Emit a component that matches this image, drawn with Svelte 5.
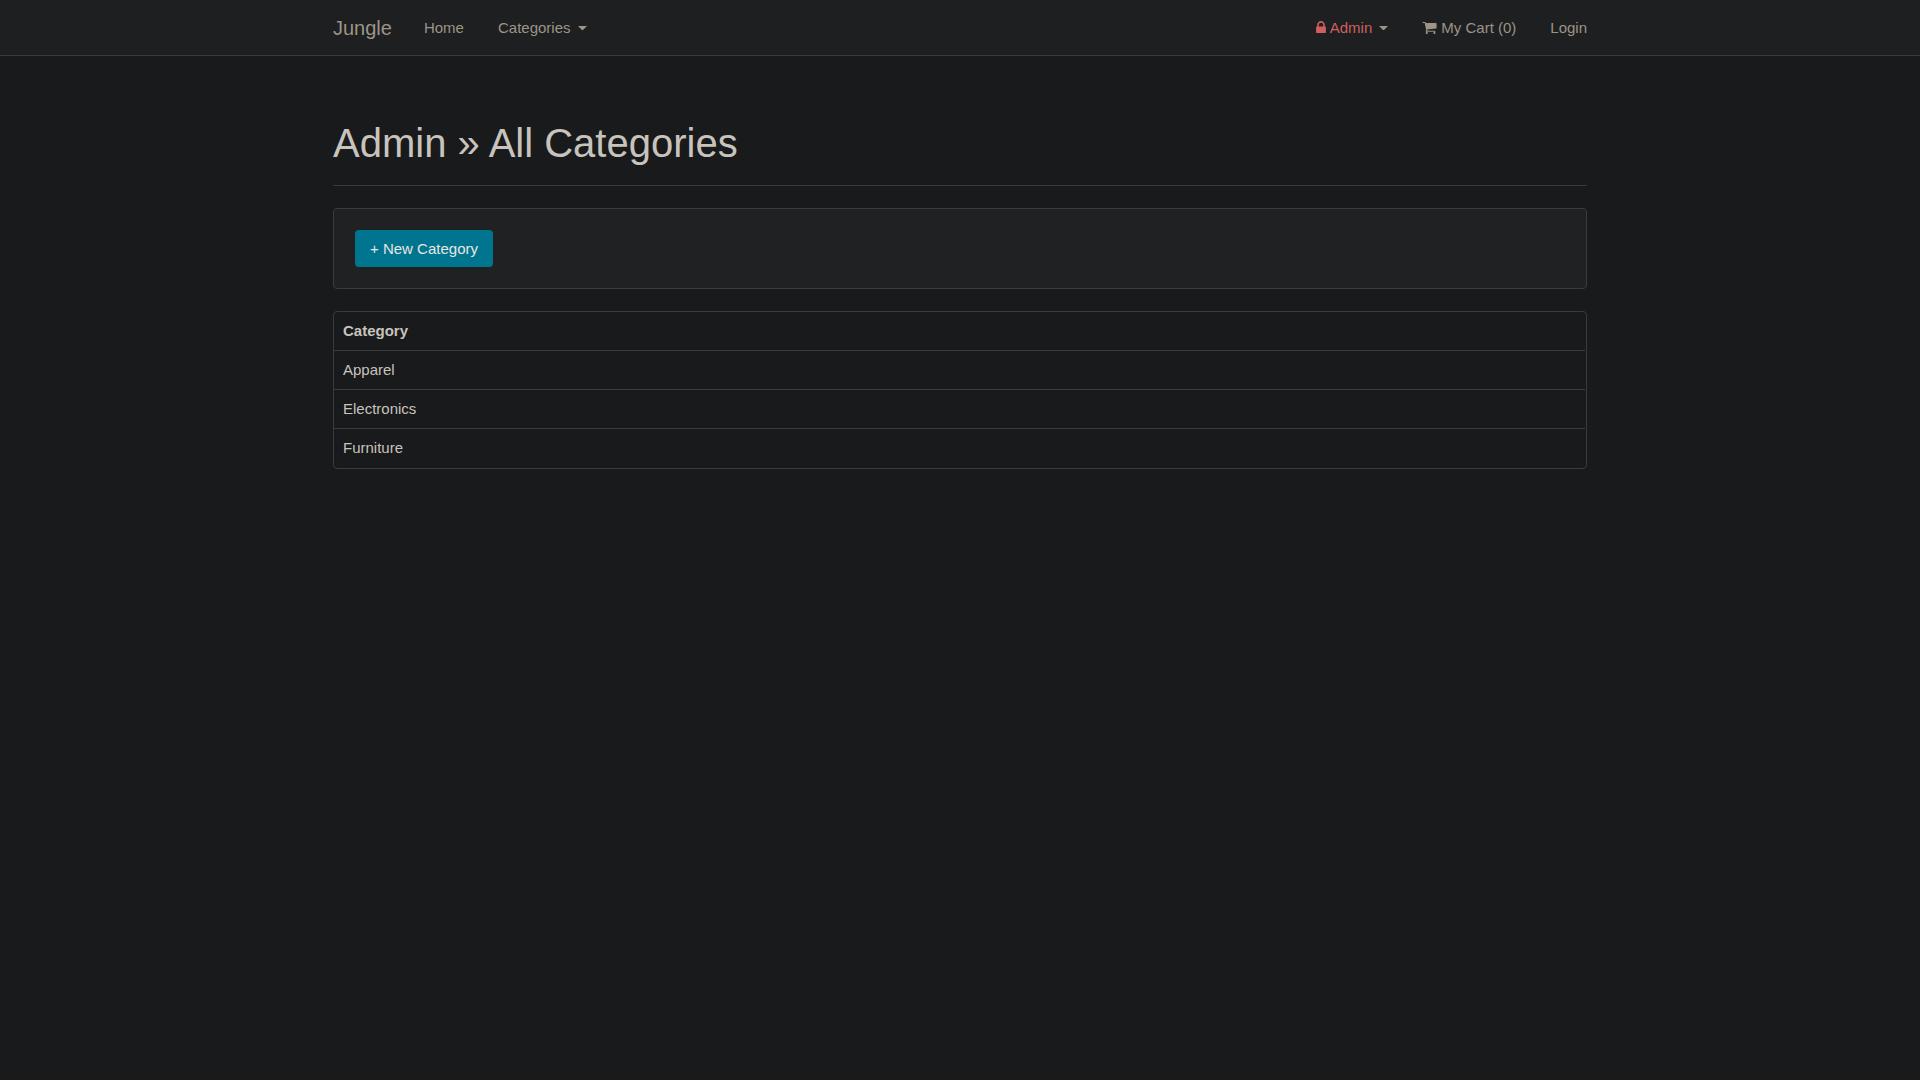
<script>
  const categories = ['Apparel', 'Electronics', 'Furniture'];
  const cartCount = 0;
</script>

<nav class="navbar">
  <div class="container bar">
    <a class="brand" href="#home">Jungle</a>
    <ul class="links">
      <li><a class="link" href="#home">Home</a></li>
      <li>
        <button class="link" type="button" aria-haspopup="true">
          <span>Categories</span><span class="caret"></span>
        </button>
      </li>
    </ul>
    <ul class="links right">
      <li>
        <button class="link" type="button" aria-haspopup="true">
          <span class="admin">
            <svg class="lock" viewBox="320 128 1152 1408" aria-hidden="true">
              <path d="M640 768h512v-192q0-106-75-181t-181-75-181 75-75 181v192zm832 96v576q0 40-28 68t-68 28h-960q-40 0-68-28t-28-68v-576q0-40 28-68t68-28h32v-192q0-184 132-316t316-132 316 132 132 316v192h32q40 0 68 28t28 68z" />
            </svg>
            <span>Admin</span>
          </span><span class="caret"></span>
        </button>
      </li>
      <li>
        <a class="link" href="#cart">
          <svg class="cart" viewBox="64 256 1664 1408" aria-hidden="true">
            <path d="M704 1536q0 52-38 90t-90 38-90-38-38-90 38-90 90-38 90 38 38 90zm896 0q0 52-38 90t-90 38-90-38-38-90 38-90 90-38 90 38 38 90zm128-1088v512q0 24-16.500 42.500t-40.500 21.500l-1044 122q13 60 13 70 0 16-24 64h920q26 0 45 19t19 45-19 45-45 19h-1024q-26 0-45-19t-19-45q0-11 8-31.500t16-36 21.500-40 15.500-29.500l-177-823h-204q-26 0-45-19t-19-45 19-45 45-19h256q16 0 28.500 6.500t19.500 15.500 13 24.500 8 26 5.500 29.500 4.500 26h1201q26 0 45 19t19 45z" />
          </svg>
          <span>My Cart ({cartCount})</span>
        </a>
      </li>
      <li><a class="link" href="#login">Login</a></li>
    </ul>
  </div>
</nav>

<main class="container">
  <header class="page-header">
    <h1>Admin » All Categories</h1>
  </header>

  <section class="well">
    <a class="button" href="#new">+ New Category</a>
  </section>

  <div class="panel">
    <table>
      <thead>
        <tr><th scope="col">Category</th></tr>
      </thead>
      <tbody>
        {#each categories as category}
          <tr><td>{category}</td></tr>
        {/each}
      </tbody>
    </table>
  </div>
</main>

<style>
  :global(body) {
    background: #181a1b;
    color: #c8c3bc;
    font-family: 'Liberation Sans', Arial, sans-serif;
    font-size: 15px;
    line-height: 22px;
  }

  .container {
    box-sizing: border-box;
    width: 100%;
    max-width: 1286px;
    margin: 0 auto;
    padding: 0 16px;
  }

  .navbar {
    background: #1d1f20;
    border-bottom: 1px solid #373c3e;
  }

  .bar {
    display: flex;
    align-items: center;
    gap: 32px;
    min-height: 55px;
  }

  .brand {
    color: #9d9488;
    font-size: 20px;
    text-decoration: none;
  }

  .links {
    display: flex;
    gap: 34px;
    margin: 0;
    padding: 0;
    list-style: none;
  }

  .right {
    margin-left: auto;
  }

  .link {
    display: flex;
    align-items: center;
    gap: 4px;
    padding: 0;
    border: 0;
    background: none;
    color: #9d9488;
    font: inherit;
    text-decoration: none;
    white-space: nowrap;
    cursor: pointer;
  }

  .admin {
    display: flex;
    align-items: center;
    gap: 4px;
    color: #cd5f5f;
  }

  svg {
    display: block;
    fill: currentColor;
  }

  .lock {
    width: 10px;
    height: 12px;
    margin-bottom: 2px;
  }

  .cart {
    width: 15px;
    height: 12px;
  }

  .caret {
    width: 1px;
    margin-left: 3px;
    border-top: 4px solid currentColor;
    border-right: 4px solid transparent;
    border-left: 4px solid transparent;
  }

  .page-header {
    margin: 65px 0 22px;
    padding-bottom: 20px;
    border-bottom: 1px solid #363b3d;
  }

  h1 {
    margin: 0;
    font-size: 40px;
    font-weight: 400;
    line-height: 44px;
  }

  .well {
    display: flex;
    margin-bottom: 22px;
    padding: 21px;
    border: 1px solid #373c3e;
    border-radius: 4px;
    background: #1f2122;
  }

  .button {
    padding: 8px 15px 7px;
    border-radius: 4px;
    background: #00758f;
    color: #e8e6e3;
    text-decoration: none;
  }

  .panel {
    padding: 0 1px 1px 0;
    border: 1px solid #373c3e;
    border-radius: 4px;
  }

  table {
    width: 100%;
    border-collapse: separate;
    border-spacing: 0;
  }

  th,
  td {
    padding: 8px 9px;
    text-align: left;
  }

  td {
    border-top: 1px solid #373c3e;
  }
</style>
